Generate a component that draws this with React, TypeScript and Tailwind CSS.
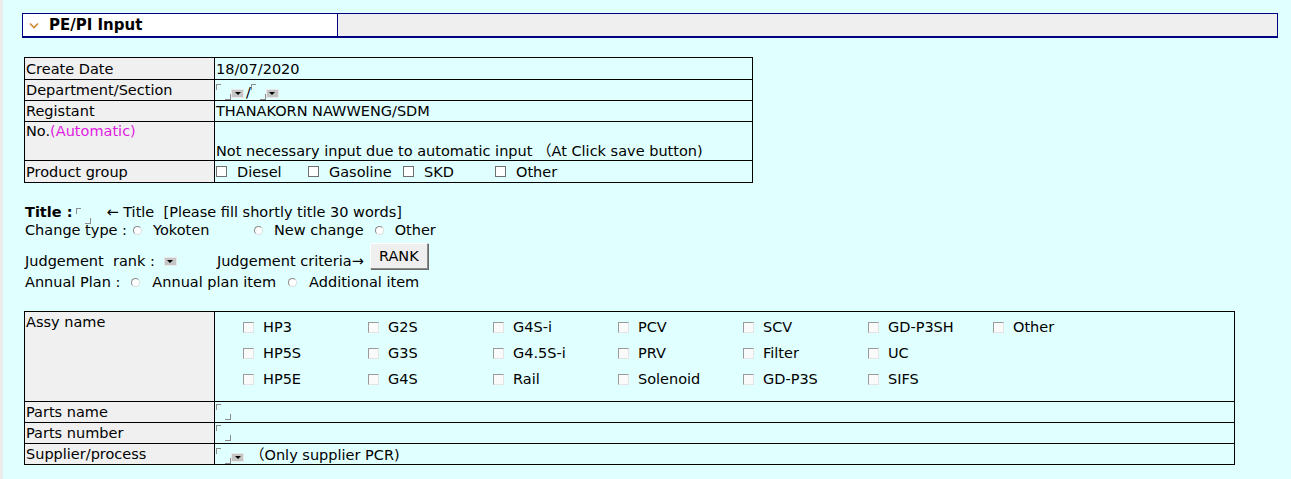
import React from "react";

const assyItems = [
  ["HP3", "G2S", "G4S-i", "PCV", "SCV", "GD-P3SH", "Other"],
  ["HP5S", "G3S", "G4.5S-i", "PRV", "Filter", "UC", ""],
  ["HP5E", "G4S", "Rail", "Solenoid", "GD-P3S", "SIFS", ""],
];

function Box({ light }: { light?: boolean }) {
  return (
    <span
      className={
        light
          ? "inline-block h-[11px] w-[11px] shrink-0 border border-t-[#9a9a9a] border-l-[#9a9a9a] border-b-[#e4e4e4] border-r-[#e4e4e4] bg-[#fafafa]"
          : "inline-block h-[11px] w-[11px] shrink-0 border border-[#707070] bg-white"
      }
    />
  );
}

function Radio() {
  return (
    <span className="inline-block h-[9px] w-[9px] shrink-0 rounded-full border border-t-[#8a8a8a] border-l-[#8a8a8a] border-b-[#dcdcdc] border-r-[#dcdcdc] bg-white" />
  );
}

// empty input placeholder: 「 」 corner marks
function Field() {
  return (
    <span className="inline-flex h-[16px] w-[15px] shrink-0 flex-col justify-between">
      <span className="block h-[6px] w-[5px] border-l border-t border-[#8c8c8c]" />
      <span className="block h-[6px] w-[6px] self-end border-b border-r border-[#8c8c8c]" />
    </span>
  );
}

function Drop() {
  return (
    <span className="inline-flex h-[9px] w-[13px] shrink-0 items-center justify-center border border-[#e8e8e8] bg-[#c4c4c4]">
      <span className="block h-0 w-0 border-x-[3px] border-t-[3px] border-x-transparent border-t-black" />
    </span>
  );
}

export default function App() {
  const label = "border border-black bg-[#f0f0f0] px-[1px]";
  const value = "border border-black px-[1px]";

  return (
    <div className="min-h-screen border-l-[3px] border-[#ececec] bg-[#e0ffff] pt-[13px] font-['DejaVu_Sans','Noto_Sans_CJK_JP',sans-serif] text-[14.5px] leading-[18px] text-black">
      {/* Section header */}
      <div className="ml-[19px] flex h-[25px] w-[1256px] border border-b-2 border-[#000080]">
        <div className="flex w-[315px] items-center border-r border-[#000080] bg-white">
          <svg width="10" height="7" viewBox="0 0 10 7" className="ml-[6px]">
            <path d="M1 1.5 L5 5.5 L9 1.5" fill="none" stroke="#d08a30" strokeWidth="1.6" />
          </svg>
          <span className="ml-[10px] text-[15px] font-bold">PE/PI Input</span>
        </div>
        <div className="flex-1 bg-[#efefef]" />
      </div>

      {/* Basic info */}
      <table className="ml-[21px] mt-[19px] w-[729px] border-collapse">
        <tbody>
          <tr className="h-[22px]">
            <td className={`${label} w-[190px] align-middle`}>Create Date</td>
            <td className={`${value} align-middle`}>18/07/2020</td>
          </tr>
          <tr className="h-[21px]">
            <td className={`${label} align-middle`}>Department/Section</td>
            <td className={`${value} align-middle`}>
              <span className="flex items-end">
                <Field />
                <span className="mb-[1px]"><Drop /></span>
                <span className="ml-[2px] leading-[16px]">/</span>
                <Field />
                <span className="mb-[1px]"><Drop /></span>
              </span>
            </td>
          </tr>
          <tr className="h-[21px]">
            <td className={`${label} align-middle`}>Registant</td>
            <td className={`${value} align-middle`}>THANAKORN NAWWENG/SDM</td>
          </tr>
          <tr className="h-[39px]">
            <td className={`${label} align-top`}>
              No.<span className="text-[#e020e0]">(Automatic)</span>
            </td>
            <td className={`${value} align-bottom`}>
              Not necessary input due to automatic input （At Click save button)
            </td>
          </tr>
          <tr className="h-[22px]">
            <td className={`${label} align-middle`}>Product group</td>
            <td className={`${value} align-middle`}>
              <div className="flex items-center">
                {[
                  ["Diesel", "w-[92px]"],
                  ["Gasoline", "w-[95px]"],
                  ["SKD", "w-[92px]"],
                  ["Other", ""],
                ].map(([t, w]) => (
                  <span key={t} className={`flex items-center gap-[10px] ${w}`}>
                    <Box />
                    {t}
                  </span>
                ))}
              </div>
            </td>
          </tr>
        </tbody>
      </table>

      {/* Title / options */}
      <div className="ml-[22px] mt-[20px]">
        <div className="flex h-[18px] items-center">
          <span className="font-bold">Title :</span>
          <span className="ml-[4px]"><Field /></span>
          <span className="ml-[15px]">← Title&nbsp; [Please fill shortly title 30 words]</span>
        </div>
        <div className="flex h-[18px] items-center">
          <span>Change type :</span>
          <span className="ml-[6px]"><Radio /></span>
          <span className="ml-[11px] w-[101px]">Yokoten</span>
          <Radio />
          <span className="ml-[11px]">New change</span>
          <span className="ml-[11px]"><Radio /></span>
          <span className="ml-[11px]">Other</span>
        </div>
        <div className="flex items-end">
          <span className="leading-[20px]">Judgement&nbsp; rank :</span>
          <span className="mb-[4px] ml-[9px]"><Drop /></span>
          <span className="ml-[40px] leading-[20px]">Judgement criteria→</span>
          <button className="mb-[2px] ml-[6px] mt-[4px] h-[26px] w-[58px] border border-t-white border-l-white border-b-[#8a8a8a] border-r-[#8a8a8a] bg-[#efefef] text-[14.5px] leading-[18px] shadow-[1px_1px_0_#6a6a6a]">
            RANK
          </button>
        </div>
        <div className="mt-[2px] flex h-[18px] items-center">
          <span>Annual Plan :</span>
          <span className="ml-[11px]"><Radio /></span>
          <span className="ml-[12px]">Annual plan item</span>
          <span className="ml-[12px]"><Radio /></span>
          <span className="ml-[12px]">Additional item</span>
        </div>
      </div>

      {/* Assy table */}
      <table className="ml-[21px] mt-[20px] w-[1211px] border-collapse">
        <tbody>
          <tr className="h-[90px]">
            <td className={`${label} w-[190px] align-top`}>
              <div className="pt-[1px]">Assy name</div>
            </td>
            <td className={`${value} align-top`}>
              <div className="grid grid-cols-[125px_125px_125px_125px_125px_125px_125px] pb-[8px] pl-[27px] pt-[2px]">
                {assyItems.flat().map((t, i) =>
                  t ? (
                    <span key={i} className="flex h-[26px] items-center gap-[9px]">
                      <Box light />
                      {t}
                    </span>
                  ) : (
                    <span key={i} />
                  )
                )}
              </div>
            </td>
          </tr>
          <tr className="h-[21px]">
            <td className={`${label} align-middle`}>Parts name</td>
            <td className={`${value} align-middle`}>
              <span className="flex"><Field /></span>
            </td>
          </tr>
          <tr className="h-[21px]">
            <td className={`${label} align-middle`}>Parts number</td>
            <td className={`${value} align-middle`}>
              <span className="flex"><Field /></span>
            </td>
          </tr>
          <tr className="h-[21px]">
            <td className={`${label} align-middle`}>Supplier/process</td>
            <td className={`${value} align-middle`}>
              <span className="flex items-end">
                <Field />
                <span className="mb-[1px]"><Drop /></span>
                <span className="ml-[6px] leading-[17px]">（Only supplier PCR)</span>
              </span>
            </td>
          </tr>
        </tbody>
      </table>
    </div>
  );
}
